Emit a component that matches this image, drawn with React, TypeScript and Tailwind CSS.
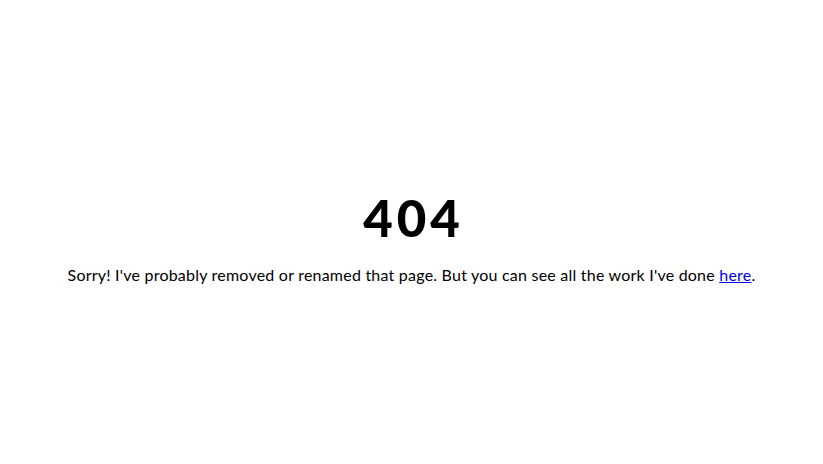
export default function App() {
  return (
    <div className="flex h-[464px] w-full flex-col items-center justify-center bg-white pt-[11px] text-black" style={{ fontFamily: "Lato, sans-serif" }}>
      <h1 className="text-[51px] font-black leading-none tracking-[4px] pl-[4px]">404</h1>
      <p className="mt-[24px] text-[16px] leading-none tracking-[0.22px]">
        Sorry! I've probably removed or renamed that page. But you can see all the work I've done{" "}
        <a href="#" className="text-[#0000ee] underline">here</a>.
      </p>
    </div>
  );
}
